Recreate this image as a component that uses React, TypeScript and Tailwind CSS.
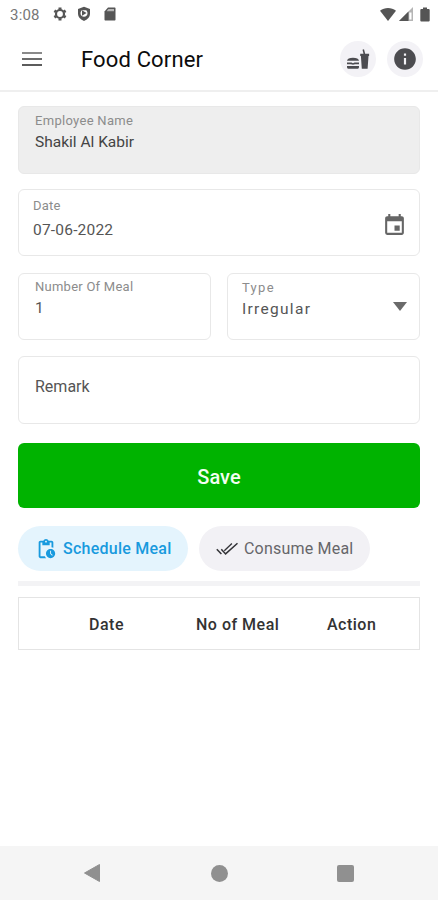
import type { ReactNode } from 'react'
import clsx from 'clsx'
import { MdEvent, MdInfo, MdPendingActions } from 'react-icons/md'

function GearIcon() {
  return (
    <svg width="14" height="14" viewBox="-7 -7 14 14" fill="none" stroke="#555">
      <circle r="4" strokeWidth="2.200" />
      <path
        d="M0-4.500v-2M0 4.500v2M3.900-2.250l1.750-1M-3.900 2.250l-1.750 1M3.900 2.250l1.750 1M-3.900-2.250l-1.750-1"
        strokeWidth="3"
      />
    </svg>
  )
}

function ShieldIcon() {
  return (
    <svg width="14" height="16" viewBox="0 0 14 16">
      <path d="M7 .8 13 3v4.6c0 3.4-2.4 6-6 7.4-3.6-1.400-6-4-6-7.400V3z" fill="#555" />
      <path
        d="M4.800 4.200h4.400c.9.900 1.300 1.900 1.300 3.100C10.500 9.300 9 10.800 7 10.800S3.500 9.300 3.500 7.300c0-1.200.4-2.200 1.300-3.100z"
        fill="#fff"
      />
      <path d="M5 4.200 9.500 7 5 9.800z" fill="#555" />
    </svg>
  )
}

function SdCardIcon() {
  return (
    <svg width="12" height="14" viewBox="0 0 12 14">
      <path d="M4 .5h6.500c.6 0 1 .4 1 1v11c0 .6-.4 1-1 1h-9c-.6 0-1-.4-1-1V4.500z" fill="#555" />
      <path d="M4.300 2h5.700v2.300H2.600z" fill="#b5b5b5" />
    </svg>
  )
}

function WifiIcon() {
  return (
    <svg width="16" height="13" viewBox="0 0 16 13">
      <path d="M8 13 0 2.800C4.700-.9 11.300-.9 16 2.800z" fill="#555" />
    </svg>
  )
}

function SignalIcon() {
  return (
    <svg width="14" height="14" viewBox="0 0 14 14">
      <path d="M0 14 14 0v14z" fill="#b5b5b5" />
      <path d="M0 14 9.500 4.500V14z" fill="#555" />
      <path d="M10.300 5.500h2.200v7h-2.200z" fill="#fff" />
    </svg>
  )
}

function BatteryIcon() {
  return (
    <svg width="10" height="15" viewBox="0 0 10 15" fill="#555">
      <path d="M3 .5h4v1.600h1.800c.5 0 .9.400.9.900v10.600c0 .5-.4.900-.9.900H1.200c-.5 0-.9-.4-.9-.9V3c0-.5.400-.9.900-.9H3z" />
    </svg>
  )
}

function BurgerDrinkIcon() {
  return (
    <svg width="24" height="22" viewBox="0 0 24 22" fill="#4c4c50">
      <path d="M1 12.800C1.300 10.700 3.300 9.800 7 9.800s5.700.9 6 3z" />
      <path d="M1 14.600h4.500l1.500.6 1.500-.6H13v1.700H9l-2 .5-2-.5H1z" />
      <path d="M1 18h12v.9c0 1.200-.8 1.900-2 1.900H3c-1.200 0-2-.7-2-1.900z" />
      <path d="M14.200 5.800h3.300L16.500 1.700l1.500-.5 1.200 4.600h3.900v2.200h-.6l-.9 12.800h-5.800l-.9-12.800h-.7z" />
    </svg>
  )
}

function DoubleCheckIcon() {
  return (
    <svg width="23" height="14" viewBox="0 0 23 14" fill="none" stroke="#333337" strokeWidth="1.500">
      <path d="m.8 7.300 4.600 4.800" />
      <path d="m5.300 7.300 4.300 4.600L21.500 1.300" />
      <path d="m8.300 8.700 7.600-7.200" strokeWidth="1.300" />
    </svg>
  )
}

function StatusBar() {
  return (
    <div className="flex h-7 items-center justify-between pl-[10px] pr-[8px]">
      <div className="flex items-center">
        <span className="w-[43px] pt-px text-[15px] leading-5 tracking-[0.2px] text-[#777]">3:08</span>
        <GearIcon />
        <span className="ml-[10px]">
          <ShieldIcon />
        </span>
        <span className="ml-[13px]">
          <SdCardIcon />
        </span>
      </div>
      <div className="flex items-center">
        <WifiIcon />
        <span className="ml-[3px]">
          <SignalIcon />
        </span>
        <span className="ml-[7px]">
          <BatteryIcon />
        </span>
      </div>
    </div>
  )
}

function RoundButton({ children }: { children: ReactNode }) {
  return (
    <button className="flex size-9 items-center justify-center rounded-full bg-[#f3f2f6]">
      {children}
    </button>
  )
}

function Header() {
  return (
    <header className="flex h-[64px] items-center border-b-2 border-[#efefef] pl-[22px] pr-[15px]">
      <button className="flex w-5 flex-col gap-[4px]">
        <span className="h-[2px] bg-[#8a8a8a]" />
        <span className="h-[2px] bg-[#6c6c6c]" />
        <span className="h-[2px] bg-[#5c5c5c]" />
      </button>
      <h1 className="ml-[39px] flex-1 pt-[2px] text-[22px] leading-7 tracking-[0.15px] text-[#0c0c0c]">
        Food Corner
      </h1>
      <div className="flex gap-[11px]">
        <RoundButton>
          <BurgerDrinkIcon />
        </RoundButton>
        <RoundButton>
          <MdInfo size={26} color="#4c4c50" />
        </RoundButton>
      </div>
    </header>
  )
}

type FieldProps = {
  label: string
  value: string
  className?: string
  valueClassName?: string
  icon?: ReactNode
}

function Field({ label, value, className, valueClassName, icon }: FieldProps) {
  return (
    <div className={clsx('flex justify-between rounded-[6px] border', className)}>
      <div>
        <div className="text-[13px] leading-4 text-[#8c8c8c]">{label}</div>
        <div className={clsx('text-[15.500px] leading-5', valueClassName)}>{value}</div>
      </div>
      {icon}
    </div>
  )
}

function Chip({ icon, label, className }: { icon: ReactNode; label: string; className?: string }) {
  return (
    <button className={clsx('flex h-[45px] items-center rounded-full text-[16px]', className)}>
      {icon}
      <span>{label}</span>
    </button>
  )
}

function MealForm() {
  return (
    <form className="flex flex-col">
      <Field
        label="Employee Name"
        value="Shakil Al Kabir"
        className="h-[68px] border-[#e8e8e8] bg-[#eee] pl-4 pt-[6px] tracking-[0.3px]"
        valueClassName="mt-[3px] tracking-normal text-[#444]"
      />
      <Field
        label="Date"
        value="07-06-2022"
        className="mt-[15px] h-[67px] border-[#e8e8e8] pl-[14px] pr-3 pt-[8px] tracking-[0.2px]"
        valueClassName="mt-[6px] text-[#555]"
        icon={<MdEvent size={25} color="#666" className="mt-[15px]" />}
      />
      <div className="mt-[17px] flex gap-4">
        <Field
          label="Number Of Meal"
          value="1"
          className="h-[67px] w-[193px] border-[#e8e8e8] pl-4 pt-[5px] tracking-[0.25px]"
          valueClassName="mt-[3px] text-[#555]"
        />
        <Field
          label="Type"
          value="Irregular"
          className="h-[67px] w-[193px] border-[#e8e8e8] pl-[14px] pr-3 pt-[6px] tracking-[1.300px]"
          valueClassName="mt-[3px] text-[#555]"
          icon={
            <svg width="14" height="9" viewBox="0 0 14 9" className="mt-[22px]">
              <path d="M0 0h14L7 9z" fill="#6a6a6a" />
            </svg>
          }
        />
      </div>
      <div className="mt-4 flex h-[68px] items-center rounded-[6px] border border-[#e8e8e8] pb-[6px] pl-4 text-[16px] text-[#555]">
        Remark
      </div>
      <button
        type="button"
        className="mt-[19px] h-[65px] rounded-[6px] bg-[#00b300] pt-[2px] text-[20px] font-medium text-[#f2fff2]"
      >
        Save
      </button>
    </form>
  )
}

function NavBar() {
  return (
    <nav className="flex h-[54px] items-center bg-[#f5f5f5] pl-[84px]">
      <svg width="16" height="18" viewBox="0 0 16 18">
        <path d="M15.500.5v17L.5 9z" fill="#909090" stroke="#909090" strokeLinejoin="round" />
      </svg>
      <span className="ml-[111px] size-[17px] rounded-full bg-[#909090]" />
      <span className="ml-[109px] size-[17px] rounded-[2px] bg-[#909090]" />
    </nav>
  )
}

export default function App() {
  return (
    <div className="flex h-[900px] w-[438px] flex-col bg-white font-['Roboto','Liberation_Sans',sans-serif]">
      <StatusBar />
      <Header />
      <main className="flex-1 px-[18px] pt-[14px]">
        <MealForm />
        <div className="mt-[18px] flex gap-[11px]">
          <Chip
            icon={<MdPendingActions size={22} />}
            label="Schedule Meal"
            className="w-[170px] gap-[6px] bg-[#e4f4fd] pl-[17px] pt-px font-medium tracking-[0.25px] text-[#189ade]"
          />
          <Chip
            icon={<DoubleCheckIcon />}
            label="Consume Meal"
            className="w-[171px] gap-[5px] bg-[#f2f1f5] pl-[17px] pt-px tracking-[0.2px] text-[#66666a]"
          />
        </div>
        <div className="mt-[10px] h-[5px] bg-[#f3f3f5]" />
        <div className="mt-[11px] flex h-[53px] items-center border-[1.500px] border-[#e4e4e4] pl-[70px] pt-[2px] text-[16px] font-medium tracking-[0.5px] text-[#333]">
          <span className="w-[107px]">Date</span>
          <span className="w-[131px]">No of Meal</span>
          <span>Action</span>
        </div>
      </main>
      <NavBar />
    </div>
  )
}
